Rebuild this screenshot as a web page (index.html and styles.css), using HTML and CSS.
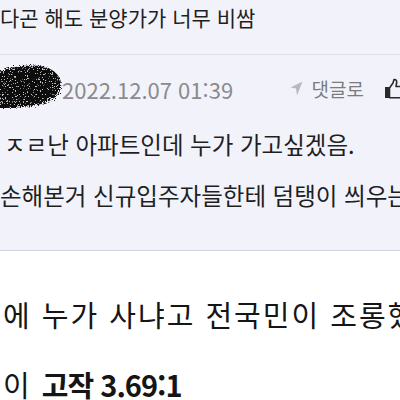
FILE: index.html
```html
<!DOCTYPE html>
<html lang="ko">
<head>
    <meta charset="UTF-8">
    <title>댓글</title>
    <link rel="stylesheet" href="styles.css">
</head>
<body>

    <!-- 댓글 영역 -->
    <div class="comment">
        <p class="prev">다곤 해도 분양가가 너무 비쌈</p>

        <div class="meta">
            <svg class="mask" width="68" height="50" viewBox="0 0 68 50">
                <defs>
                    <filter id="rough" x="-10%" y="-10%" width="120%" height="120%">
                        <feTurbulence type="fractalNoise" baseFrequency="0.8" numOctaves="2" seed="5" result="n"/>
                        <feDisplacementMap in="SourceGraphic" in2="n" scale="7" result="d"/>
                        <feTurbulence type="fractalNoise" baseFrequency="1.6" numOctaves="1" seed="9" result="s"/>
                        <feColorMatrix in="s" type="matrix"
                                       values="0 0 0 0 0.55  0 0 0 0 0.55  0 0 0 0 0.55  0 0 0 -20 7.8" result="dots"/>
                        <feComposite in="dots" in2="d" operator="in" result="dd"/>
                        <feMerge>
                            <feMergeNode in="d"/>
                            <feMergeNode in="dd"/>
                        </feMerge>
                    </filter>
                </defs>
                <path filter="url(#rough)" fill="#111111"
                      d="M0 12 C10 6 28 3 44 5 C56 7 63 14 64 22 C65 30 60 36 52 40 C40 46 20 47 0 47 Z"/>
            </svg>
            <span class="date">2022.12.07 01:39</span>
            <span class="reply">
                <svg width="13" height="15" viewBox="0 0 13 15">
                    <path d="M12.5 0.5 L0.5 6.5 L6 7.5 L7 14.5 Z" fill="#b9b9bd"/>
                </svg>
                댓글로
            </span>
            <svg class="like" width="22" height="22" viewBox="0 0 22 22">
                <rect x="1" y="9" width="4" height="11" fill="#2a2a2a"/>
                <path d="M5.5 10 L9 5 L10 1.5 C12 1.2 13 2.5 12.6 5 L12 8.5 L19 8.5 C21 8.5 21.5 10.5 20.5 11.5 C21.5 12.5 21 14 20 14.5 C20.8 15.5 20.3 17 19.2 17.3 C19.6 18.5 19 19.8 17.5 19.8 L5.5 19.8 Z"
                      fill="none" stroke="#2a2a2a" stroke-width="1.6" stroke-linejoin="round"/>
            </svg>
        </div>

        <div class="body">
            <p>ㅈㄹ난 아파트인데 누가 가고싶겠음.</p>
            <p>손해본거 신규입주자들한테 덤탱이 씌우는</p>
        </div>
    </div>

    <!-- 본문 영역 -->
    <div class="article">
        <p>에 누가 사냐고 전국민이 조롱했</p>
        <p>이 <b>고작 3.69:1</b></p>
    </div>

</body>
</html>
```

FILE: styles.css
```css
body {
    margin: 0;
    width: 400px;
    height: 400px;
    overflow: hidden;
    background-color: #ffffff;
    font-family: "Noto Sans CJK KR", "Noto Sans", sans-serif;
    color: #1f1f1f;
}

p {
    margin: 0;
    white-space: nowrap;
}

.comment {
    background-color: #f2f3fa;
    border-bottom: 1px solid #d5d6dc;
    height: 250px;
    overflow: hidden;
}

.prev {
    font-size: 21px;
    line-height: 34px;
    padding-bottom: 20px;
    border-bottom: 1px solid #dedfe5;
}

.meta {
    display: flex;
    align-items: center;
    height: 64px;
    white-space: nowrap;
}

.mask {
    flex: none;
    margin-left: -3px;
    margin-top: -2px;
}

.date {
    font-size: 22px;
    color: #8b8b8f;
    margin-left: -3px;
    margin-top: 4px;
}

.reply {
    display: flex;
    align-items: center;
    gap: 9px;
    margin-left: auto;
    margin-top: 2px;
    font-size: 19px;
    color: #7b7b80;
}

.like {
    flex: none;
    margin-left: 20px;
    margin-right: -6px;
    margin-top: 4px;
}

.body p {
    font-size: 23.5px;
    line-height: 51px;
    padding-left: 4px;
}

.body p + p {
    padding-left: 0;
}

.article {
    padding-top: 28px;
}

.article p {
    font-size: 29px;
    line-height: 70px;
    color: #151515;
    letter-spacing: 2px;
    padding-left: 3px;
}

.article b {
    font-weight: 700;
    letter-spacing: -1px;
}
```
